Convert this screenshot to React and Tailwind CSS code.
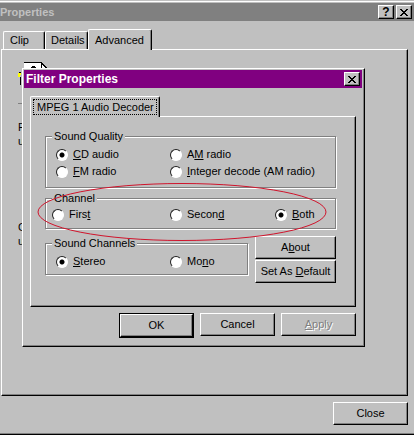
import { useState } from 'react';

const bevel =
  'border border-t-white border-l-white border-r-black border-b-black shadow-[inset_-1px_-1px_0_#808080]';

const CloseIcon = () => (
  <svg width="8" height="7" viewBox="0 0 8 7" shapeRendering="crispEdges" aria-hidden="true">
    <path
      d="M0 0h2v1H0zM6 0h2v1H6zM1 1h2v1H1zM5 1h2v1H5zM2 2h4v1H2zM3 3h2v1H3zM2 4h4v1H2zM1 5h2v1H1zM5 5h2v1H5zM0 6h2v1H0zM6 6h2v1H6z"
      fill="#000"
    />
  </svg>
);

const ClipIcon = () => (
  <svg width="32" height="32" viewBox="0 0 32 32" shapeRendering="crispEdges" aria-hidden="true">
    <path d="M6 0h17v8h6v23H6z" fill="#fff" />
    <path d="M6 0h17v1H6zM23 0h1v1h1v1h1v1h1v1h1v1h1v2h-6z" fill="#000" />
    <path d="M24 3h1v1h1v1h1v1h-3z" fill="#fff" />
    <path d="M14 4h3v1h1v2h-4v-1h-1v-1h1z" fill="#000" />
    <path d="M0 11h3v2h-1v2H0z" fill="#ffff00" />
    <path d="M1 10h2v1H1zM2 15h1v8H2z" fill="#000" />
  </svg>
);

const TitleButton = ({ label, children }) => (
  <button
    type="button"
    aria-label={label}
    className={`flex h-[14px] w-4 items-center justify-center bg-[#c0c0c0] text-[12px] leading-3 font-bold ${bevel}`}
  >
    {children}
  </button>
);

const Button = ({ children, className = '', disabled = false }) => (
  <button
    type="button"
    disabled={disabled}
    className={`flex h-[23px] items-center justify-center bg-[#c0c0c0] whitespace-nowrap disabled:text-[#808080] disabled:[text-shadow:1px_1px_0_#fff] ${bevel} ${className}`}
  >
    <span>{children}</span>
  </button>
);

const Tab = ({ children, selected = false, className = '' }) => (
  <button
    type="button"
    role="tab"
    aria-selected={selected}
    className={`rounded-t-[2px] border-t border-r border-l border-t-white border-r-black border-l-white bg-[#c0c0c0] text-left whitespace-nowrap shadow-[inset_-1px_0_0_#808080] ${className}`}
  >
    {children}
  </button>
);

const Radio = ({ name, value, current, onChange, children }) => (
  <label className="flex items-center gap-[5px] leading-[17px] whitespace-nowrap">
    <input
      type="radio"
      name={name}
      value={value}
      checked={current === value}
      onChange={() => onChange(value)}
      className="size-3 shrink-0 appearance-none rounded-full border border-t-[#202020] border-r-white border-b-white border-l-[#202020] bg-white checked:bg-[radial-gradient(circle,#000_2px,#fff_3px)]"
    />
    <span>{children}</span>
  </label>
);

const Group = ({ title, children, className = '' }) => (
  <fieldset
    className={`border border-[#808080] shadow-[1px_1px_0_#fff,inset_1px_1px_0_#fff] ${className}`}
  >
    <legend className="ml-1.5 bg-[#c0c0c0] px-0.5 leading-[14px]">{title}</legend>
    {children}
  </fieldset>
);

const FilterDialog = () => {
  const [quality, setQuality] = useState('cd');
  const [channel, setChannel] = useState('both');
  const [sound, setSound] = useState('stereo');

  return (
    <div
      role="dialog"
      aria-label="Filter Properties"
      className={`absolute top-[68px] left-[22px] w-[343px] bg-[#c0c0c0] px-px pt-px pb-2 ${bevel}`}
    >
      <div className="mr-px flex h-[18px] items-center justify-between bg-[#800080] pr-0.5 pl-0.5 text-[12px] font-bold text-white">
        <span>Filter Properties</span>
        <span className="flex text-black">
          <TitleButton label="Close">
            <CloseIcon />
          </TitleButton>
        </span>
      </div>

      <div className="mt-2 mr-[7px] ml-1.5">
        <div role="tablist" className="relative z-10 -mb-px flex">
          <Tab selected className="h-[21px] w-[130px] p-0.5">
            <span className="block border border-dotted border-black pl-[3px] leading-[14px]">
              MPEG 1 Audio Decoder
            </span>
          </Tab>
        </div>

        <div className={`pt-3 pr-[19px] pb-[23px] pl-[14px] ${bevel}`}>
          <Group title="Sound Quality" className="pb-[7px]">
            <div className="grid grid-cols-[114px_1fr] pt-[3px] pl-[10px]">
              <Radio name="quality" value="cd" current={quality} onChange={setQuality}>
                <u>C</u>D audio
              </Radio>
              <Radio name="quality" value="am" current={quality} onChange={setQuality}>
                A<u>M</u> radio
              </Radio>
              <Radio name="quality" value="fm" current={quality} onChange={setQuality}>
                <u>F</u>M radio
              </Radio>
              <Radio name="quality" value="integer" current={quality} onChange={setQuality}>
                <u>I</u>nteger decode (AM radio)
              </Radio>
            </div>
          </Group>

          <Group title="Channel" className="mt-[3px] pb-[5px]">
            <div className="grid grid-cols-[118px_105px_1fr] pt-px pl-[6px]">
              <Radio name="channel" value="first" current={channel} onChange={setChannel}>
                Firs<u>t</u>
              </Radio>
              <Radio name="channel" value="second" current={channel} onChange={setChannel}>
                Secon<u>d</u>
              </Radio>
              <Radio name="channel" value="both" current={channel} onChange={setChannel}>
                <u>B</u>oth
              </Radio>
            </div>
          </Group>

          <div className="mt-[7px] flex items-start gap-[7px]">
            <Group title="Sound Channels" className="flex-1 pb-1">
              <div className="grid grid-cols-[114px_1fr] pt-[3px] pl-[10px]">
                <Radio name="sound" value="stereo" current={sound} onChange={setSound}>
                  <u>S</u>tereo
                </Radio>
                <Radio name="sound" value="mono" current={sound} onChange={setSound}>
                  Mo<u>n</u>o
                </Radio>
              </div>
            </Group>
            <div className="flex w-[81px] flex-col gap-px">
              <Button>
                A<u>b</u>out
              </Button>
              <Button>
                Set As <u>D</u>efault
              </Button>
            </div>
          </div>
        </div>

        <div className="mt-1.5 flex justify-end gap-1.5">
          <div className="flex border border-black">
            <Button className="h-[21px] w-[73px]">OK</Button>
          </div>
          <Button className="w-[75px]">Cancel</Button>
          <Button className="w-[75px]" disabled>
            <u>A</u>pply
          </Button>
        </div>
      </div>

      {/* Hand drawn mark round the channel options */}
      <svg
        className="pointer-events-none absolute top-[113px] left-[14px] z-20"
        width="292"
        height="62"
        viewBox="0 0 292 62"
        fill="none"
        aria-hidden="true"
      >
        <ellipse cx="145" cy="30" rx="144" ry="28.5" stroke="#d0142c" />
      </svg>
    </div>
  );
};

const App = () => (
  <div className="relative flex min-h-screen flex-col overflow-hidden border-b border-black bg-[#c0c0c0] font-['Liberation_Sans',Arial,sans-serif] text-[11px] text-black shadow-[inset_0_-1px_0_#808080]">
    <div className="mt-px h-px bg-white" />
    <div className="mt-px flex h-[18px] items-center justify-between bg-[#808080] pr-0.5 font-bold text-[#c0c0c0]">
      <span>Properties</span>
      <span className="flex gap-0.5 text-black">
        <TitleButton label="Help">?</TitleButton>
        <TitleButton label="Close">
          <CloseIcon />
        </TitleButton>
      </span>
    </div>

    <div role="tablist" className="relative mt-2 -mb-px flex items-end pl-[3px]">
      <Tab className="mb-px h-[18px] w-[42px] pl-1.5">Clip</Tab>
      <Tab className="mb-px h-[18px] w-[43px] pl-[5px]">Details</Tab>
      <Tab selected className="h-[21px] w-16 pl-1.5">
        Advanced
      </Tab>
    </div>

    <div className={`mr-1.5 ml-px flex-1 pt-3 pl-4 ${bevel}`}>
      <ClipIcon />
      <div className="mt-[9px] h-px w-6 bg-[#808080]" />
      <p className="mt-4 leading-[14px]">F</p>
      <p className="leading-[14px]">u</p>
      <p className="mt-[72px] leading-[14px]">C</p>
      <p className="leading-[14px]">u</p>
    </div>

    <div className="flex justify-end pt-1.5 pr-1.5 pb-[9px]">
      <Button className="w-[75px]">Close</Button>
    </div>

    <FilterDialog />
  </div>
);

export default App;
